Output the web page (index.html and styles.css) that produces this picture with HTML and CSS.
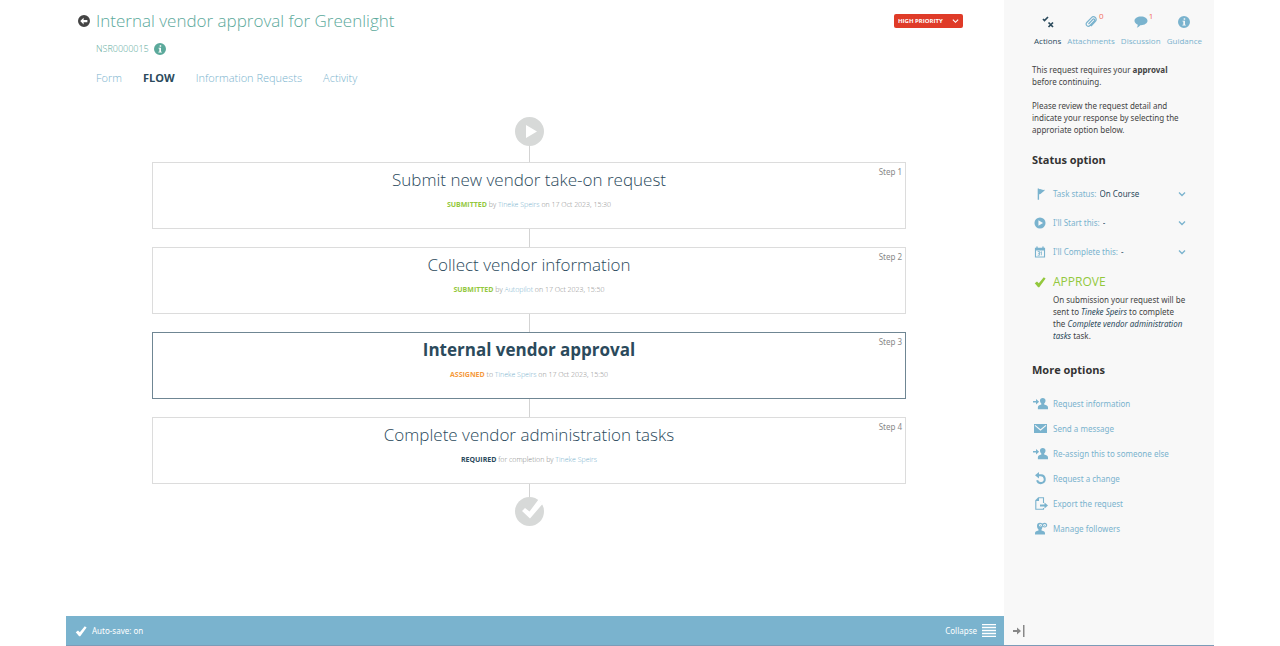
FILE: index.html
```html
<!DOCTYPE html>
<html lang="en">
<head>
    <meta charset="UTF-8">
    <meta name="viewport" content="width=device-width, initial-scale=1.0">
    <title>Internal vendor approval for Greenlight</title>
    <link rel="stylesheet" href="styles.css">
</head>
<body>
    <svg class="sprite" aria-hidden="true">
        <symbol id="chevron" viewBox="0 0 8 8"><path d="M1 2.5l3 3 3-3" fill="none" stroke="currentColor" stroke-width="1.3"/></symbol>
        <symbol id="info" viewBox="0 0 16 16"><path fill-rule="evenodd" d="M8 0a8 8 0 1 0 0 16A8 8 0 0 0 8 0zM7.6 3h2v2h-2zM6 6.3h3.3v5.2h1.2v1H5.8v-1h1.3V7.3H6z"/></symbol>
        <symbol id="tick" viewBox="0 0 16 16"><path d="M1 9.5l3-2.3 2.4 2.5L13 1.5l2.5 1.7L7 15H5.5z"/></symbol>
        <symbol id="assign" viewBox="0 0 20 16"><path d="M0 4.7h4V2l4.2 3.7L4 9.4V6.7H0zM13 .5c2.2 0 3.7 1.4 3.7 3.6 0 1.8-.8 3.1-1.8 3.9v1.2c2.8.7 5.1 1.5 5.1 4.1v2.2H6.5v-2.2c0-2.6 2-3.4 4.6-4.1V8c-1-.8-1.8-2.1-1.8-3.9C9.3 1.9 10.8.5 13 .5z"/></symbol>
    </svg>

    <div class="page">
        <main class="main">
            <header class="header">
                <div class="title-row">
                    <button class="back" type="button" aria-label="Back">
                        <svg class="icon" viewBox="0 0 16 16"><path fill-rule="evenodd" d="M8 0a8 8 0 1 0 0 16A8 8 0 0 0 8 0zM7.5 3.5v3h5v3h-5v3L3 8z"/></svg>
                    </button>
                    <h1>Internal vendor approval for Greenlight</h1>
                    <div class="priority">
                        <select aria-label="Priority">
                            <option>HIGH PRIORITY</option>
                        </select>
                        <svg class="chevron"><use href="#chevron"/></svg>
                    </div>
                </div>
                <div class="reference">
                    <span>NSR0000015</span>
                    <svg class="icon"><use href="#info"/></svg>
                </div>
                <nav class="tabs">
                    <a href="#form">Form</a>
                    <a href="#flow" class="active">FLOW</a>
                    <a href="#requests">Information Requests</a>
                    <a href="#activity">Activity</a>
                </nav>
            </header>

            <section class="flow">
                <svg class="node" viewBox="0 0 29 29"><path fill-rule="evenodd" d="M14.5 0a14.5 14.5 0 1 0 0 29a14.5 14.5 0 0 0 0-29zM11 8l11 6.500L11 21z"/></svg>
                <div class="line line-start"></div>
                <article class="step">
                    <span class="step-number">Step 1</span>
                    <h2>Submit new vendor take-on request</h2>
                    <p><b class="submitted">SUBMITTED</b> by <a href="#user">Tineke Speirs</a> on 17 Oct 2023, 15:30</p>
                </article>
                <div class="line"></div>
                <article class="step">
                    <span class="step-number">Step 2</span>
                    <h2>Collect vendor information</h2>
                    <p><b class="submitted">SUBMITTED</b> by <a href="#user">Autopilot</a> on 17 Oct 2023, 15:50</p>
                </article>
                <div class="line"></div>
                <article class="step current">
                    <span class="step-number">Step 3</span>
                    <h2>Internal vendor approval</h2>
                    <p><b class="assigned">ASSIGNED</b> to <a href="#user">Tineke Speirs</a> on 17 Oct 2023, 15:50</p>
                </article>
                <div class="line"></div>
                <article class="step">
                    <span class="step-number">Step 4</span>
                    <h2>Complete vendor administration tasks</h2>
                    <p><b class="required">REQUIRED</b> for completion by <a href="#user">Tineke Speirs</a></p>
                </article>
                <div class="line line-end"></div>
                <svg class="node" viewBox="0 0 29 29"><circle cx="14.5" cy="14.5" r="14.5"/><path fill="#fff" d="M7 14l3-3 4.500 3.500L23.500 2.500l4 4.500L15 21.500z"/></svg>
            </section>

            <footer class="footer">
                <svg class="icon"><use href="#tick"/></svg>
                <span>Auto-save: on</span>
                <button class="collapse" type="button">
                    Collapse
                    <svg viewBox="0 0 14 13"><path d="M0 .5h14M0 3.500h14M0 6.500h14M0 9.500h14M0 12.500h14" stroke="currentColor" stroke-width="1.400"/></svg>
                </button>
            </footer>
        </main>

        <aside class="sidebar">
            <nav class="side-tabs">
                <a href="#actions" class="active">
                    <svg class="icon" viewBox="0 0 12 12"><path d="M1 3l1.500 1.500L6 1M6.500 6.500l4.500 4.500M11 6.500L6.500 11" fill="none" stroke="currentColor" stroke-width="1.700"/></svg>
                    Actions
                </a>
                <a href="#attachments">
                    <span class="badge">0</span>
                    <svg class="icon" viewBox="0 0 12 12"><path d="M3.500 8l4.200-4.500c1.200-1.200 2.700.2 1.600 1.400L5 9.500C3 11.600-.3 8.800 1.800 6.500L6.300 1.800c2.700-2.700 6.600.8 4.100 3.600L6 10.200" fill="none" stroke="currentColor" stroke-width="1.200"/></svg>
                    Attachments
                </a>
                <a href="#discussion">
                    <span class="badge">1</span>
                    <svg class="icon wide" viewBox="0 0 14 12"><path d="M7 .5c3.700 0 6.500 1.900 6.500 4.300S10.700 9.200 7 9.200h-.7C5.400 10.400 4.200 11.300 2.800 11.700c.6-.8 1-1.900 1-3C1.800 8 .5 6.500.5 4.800.5 2.400 3.300.5 7 .5z"/></svg>
                    Discussion
                </a>
                <a href="#guidance">
                    <svg class="icon"><use href="#info"/></svg>
                    Guidance
                </a>
            </nav>

            <div class="side-content">
                <p>This request requires your <b>approval</b> before continuing.</p>
                <p>Please review the request detail and indicate your response by selecting the approriate option below.</p>

                <h3>Status option</h3>
                <div class="status">
                    <svg class="icon" viewBox="0 0 13 13"><path d="M4 .5h1.500v.8c2.500-.8 3 1.500 6 .7v.8L7 6.500c-.5.200-1 .2-1.500.2v6H4z"/></svg>
                    <label for="taskStatus">Task status:</label>
                    <select id="taskStatus"><option>On Course</option></select>
                    <svg class="chevron"><use href="#chevron"/></svg>
                </div>
                <div class="status">
                    <svg class="icon" viewBox="0 0 13 13"><path fill-rule="evenodd" d="M6.500.5a6 6 0 1 0 0 12a6 6 0 0 0 0-12zM4.800 3.500l5 3-5 3z"/></svg>
                    <label for="startThis">I'll Start this:</label>
                    <select id="startThis"><option>-</option></select>
                    <svg class="chevron"><use href="#chevron"/></svg>
                </div>
                <div class="status">
                    <svg class="icon" viewBox="0 0 13 13"><path fill-rule="evenodd" d="M1 2h1.500V.5H4V2h5V.5h1.500V2H12v10.500H1zM2.200 5v6.400h8.600V5z"/><path d="M4 6h2v4H4M4.500 8H6M8 6v4M8 6.500l-1 .5" fill="none" stroke="currentColor" stroke-width=".9"/></svg>
                    <label for="completeThis">I'll Complete this:</label>
                    <select id="completeThis"><option>-</option></select>
                    <svg class="chevron"><use href="#chevron"/></svg>
                </div>

                <button class="approve" type="button">
                    <svg class="icon"><use href="#tick"/></svg>
                    APPROVE
                </button>
                <p class="approve-note">On submission your request will be sent to <em>Tineke Speirs</em> to complete the <em>Complete vendor administration tasks</em> task.</p>

                <h3>More options</h3>
                <ul class="options">
                    <li><a href="#information"><svg><use href="#assign"/></svg>Request information</a></li>
                    <li><a href="#message"><svg viewBox="0 0 15 13"><path d="M1 2h13v9H1z"/><path d="M2 3.300l5.500 4.700L13 3.300" fill="none" stroke="#f8f8f8" stroke-width="1.100"/></svg>Send a message</a></li>
                    <li><a href="#reassign"><svg><use href="#assign"/></svg>Re-assign this to someone else</a></li>
                    <li><a href="#change"><svg viewBox="0 0 15 13"><path d="M4.500 3.300H8a3.900 3.900 0 1 1-3.900 5" fill="none" stroke="currentColor" stroke-width="2"/><path d="M2 3.300L6 0v6.600z"/></svg>Request a change</a></li>
                    <li><a href="#export"><svg viewBox="0 0 15 13"><path d="M10.500 6V.8h-5L2.800 3.500v8.700h7.700V11M5.500.8v2.700H2.800" fill="none" stroke="currentColor" stroke-width="1.100"/><path d="M7 7.400h4.500V5.500l3.500 3-3.500 3V9.600H7z"/></svg>Export the request</a></li>
                    <li><a href="#followers"><svg viewBox="0 0 15 13"><path d="M4 4c0-2 1-3.200 3-3.200 1 0 1.800.2 2.500.8.700-.6 1.500-.8 2.200-.8 1.500 0 2.500 1 2.500 2.300s-1 2.400-2.500 2.400c-.9 0-1.600-.3-2.100-.9C9.300 6 9 7 8.500 7.500v1c2.500.5 3.500 1.200 3.500 3v1H2v-1c0-1.800 1-2.500 3.500-3v-1C4.500 6.700 4 5.500 4 4z"/><circle cx="7.500" cy="3.200" r="1.300" fill="#f8f8f8"/><circle cx="11.600" cy="3.200" r="1.300" fill="#f8f8f8"/><circle cx="7.500" cy="3.200" r=".5"/><circle cx="11.600" cy="3.200" r=".5"/></svg>Manage followers</a></li>
                </ul>
            </div>

            <button class="hide-panel" type="button" aria-label="Hide panel">
                <svg viewBox="0 0 12 12"><path d="M0 5h4V2.500L8 6 4 9.500V7H0zM10 0h1.500v12H10z"/></svg>
            </button>
        </aside>
    </div>
</body>
</html>
```
FILE: styles.css
```css
* {
    box-sizing: border-box;
}

body {
    margin: 0;
    background-color: #fff;
    color: #444;
    font-family: 'Open Sans', 'Noto Sans', sans-serif;
    font-size: 8px;
    line-height: 12px;
}

h1, h2, h3, p, ul {
    margin: 0;
    padding: 0;
}

a {
    color: #7ab3ce;
    text-decoration: none;
}

b {
    font-weight: bold;
}

button, select {
    padding: 0;
    border: none;
    background: none;
    color: inherit;
    font: inherit;
    cursor: pointer;
}

select {
    appearance: none;
}

svg {
    display: block;
    flex: none;
    fill: currentColor;
}

.sprite {
    display: none;
}

.icon {
    width: 12px;
    height: 12px;
}

.chevron {
    width: 8px;
    height: 8px;
}

.page {
    display: flex;
    min-height: 100vh;
    margin: 0 66px;
    border-bottom: 1px solid #7c9cb8;
}

.main {
    flex: 1;
    display: flex;
    flex-direction: column;
}

/* Header */
.header {
    padding: 9px 41px 0 12px;
}

.title-row {
    display: flex;
    align-items: center;
    gap: 6px;
    height: 24px;
}

.back {
    color: #444;
}

h1 {
    flex: 1;
    color: #5ba99b;
    font-size: 17px;
    font-weight: 300;
    line-height: 24px;
}

.priority {
    display: flex;
    align-items: center;
    justify-content: space-between;
    width: 69px;
    height: 14px;
    padding: 0 4px;
    border-radius: 2px;
    background-color: #df3b28;
    color: #fff;
    font-size: 6px;
    font-weight: bold;
}

.priority .chevron {
    width: 7px;
}

.reference {
    display: flex;
    align-items: center;
    gap: 5px;
    margin-top: 10px;
    padding-left: 18px;
    color: #5ba99b;
    font-size: 9px;
    font-weight: 300;
}

.tabs {
    display: flex;
    gap: 21px;
    margin-top: 15px;
    padding-left: 18px;
    font-size: 11px;
    font-weight: 300;
    line-height: 16px;
}

.tabs .active {
    color: #2b4a5c;
    font-weight: bold;
}

/* Flow */
.flow {
    flex: 1;
    display: flex;
    flex-direction: column;
    align-items: center;
    padding: 31px 98px 0 86px;
}

.node {
    width: 29px;
    height: 29px;
    color: #d7d9d8;
}

.line {
    width: 1px;
    height: 18px;
    background-color: #d3d3d3;
}

.line-start {
    height: 16px;
}

.line-end {
    height: 13px;
}

.step {
    position: relative;
    width: 100%;
    padding: 5px 0 17px;
    border: 1px solid #dcdcdc;
    text-align: center;
}

.step h2 {
    color: #2b4a5c;
    font-size: 17px;
    font-weight: 300;
    line-height: 24px;
}

.step p {
    margin-top: 7px;
    color: #888;
    font-size: 7px;
    font-weight: 300;
}

.step-number {
    position: absolute;
    top: 3px;
    right: 3px;
    color: #888;
    font-family: 'Noto Sans', sans-serif;
}

.current {
    border-color: #6f8693;
}

.step.current h2 {
    font-weight: bold;
}

.submitted {
    color: #93c83d;
}

.assigned {
    color: #f5993c;
}

.required {
    color: #2b4a5c;
}

/* Footer */
.footer {
    display: flex;
    align-items: center;
    gap: 5px;
    height: 29px;
    padding: 0 8px 0 9px;
    background-color: #7ab3ce;
    color: #fff;
    font-family: 'Noto Sans', sans-serif;
}

.collapse {
    display: flex;
    align-items: center;
    gap: 5px;
    margin-left: auto;
}

.collapse svg {
    width: 14px;
    height: 13px;
}

/* Sidebar */
.sidebar {
    display: flex;
    flex-direction: column;
    width: 210px;
    background-color: #f8f8f8;
    font-family: 'Noto Sans', sans-serif;
}

.side-tabs {
    display: flex;
    justify-content: space-between;
    padding: 16px 12px 0 30px;
    font-family: 'Open Sans', sans-serif;
}

.side-tabs a {
    position: relative;
    display: flex;
    flex-direction: column;
    align-items: center;
    gap: 7px;
}

.side-tabs .active {
    color: #2b4a5c;
}

.side-tabs .wide {
    width: 14px;
}

.badge {
    position: absolute;
    top: -6px;
    left: 50%;
    margin-left: 8px;
    color: #f26c5e;
}

.side-content {
    flex: 1;
    padding: 17px 20px 0 28px;
}

.side-content p {
    margin-bottom: 12px;
}

h3 {
    color: #333;
    font-family: 'Open Sans', sans-serif;
    font-size: 11px;
    line-height: 16px;
}

.side-content h3 {
    margin: 16px 0 11px;
}

.status {
    display: flex;
    align-items: center;
    height: 29px;
    padding: 0 8px 0 2px;
    color: #7ab3ce;
}

.status label {
    margin: 0 3px 0 7px;
}

.status select {
    flex: 1;
    color: #2b4a5c;
}

.approve {
    display: flex;
    align-items: center;
    gap: 7px;
    margin-top: 7px;
    padding-left: 2px;
    color: #93c83d;
    font-family: 'Open Sans', sans-serif;
    font-size: 12px;
    line-height: 18px;
}

.side-content .approve-note {
    margin: 3px 0 0 21px;
    padding-right: 7px;
}

.approve-note em {
    color: #2b4a5c;
}

.side-content .approve-note + h3 {
    margin: 20px 0 13px;
}

.options {
    list-style: none;
}

.options a {
    display: flex;
    align-items: center;
    gap: 5px;
    height: 25px;
    padding-left: 1px;
}

.options svg {
    width: 15px;
    height: 13px;
}

.hide-panel {
    display: flex;
    align-items: center;
    height: 29px;
    padding-left: 9px;
    color: #888;
}

.hide-panel svg {
    width: 12px;
    height: 12px;
}
```
